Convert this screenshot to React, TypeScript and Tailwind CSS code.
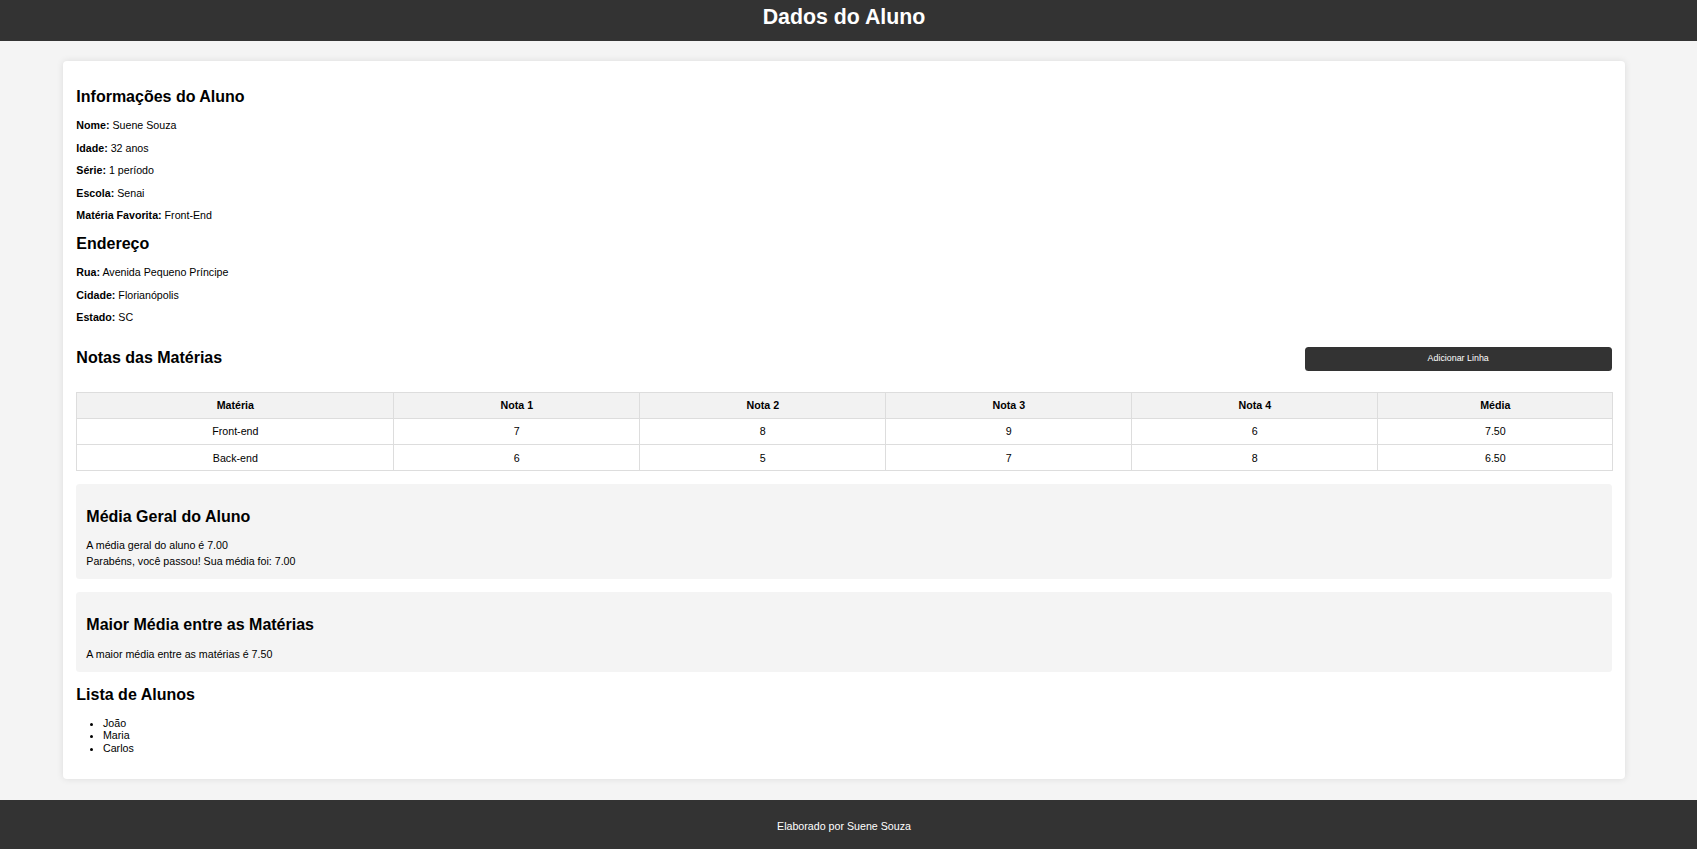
import React from 'react';

interface Nota {
  materia: string;
  notas: number[];
}

const notas: Nota[] = [
  { materia: 'Front-end', notas: [7, 8, 9, 6] },
  { materia: 'Back-end', notas: [6, 5, 7, 8] },
];

const alunos = ['João', 'Maria', 'Carlos'];

const media = (n: number[]) => n.reduce((a, b) => a + b, 0) / n.length;

export default function App() {
  const medias = notas.map((n) => media(n.notas));
  const mediaGeral = media(medias);
  const maiorMedia = Math.max(...medias);

  return (
    <div className="min-h-screen bg-[#f4f4f4] font-['Liberation_Sans',Arial,sans-serif] text-black">
      {/* Header */}
      <header className="h-[41px] bg-[#333333] pt-[5.4px] pr-[9px] text-center">
        <h1 className="text-[21.33px] font-bold leading-[24.5px] text-white">Dados do Aluno</h1>
      </header>

      <main className="pt-[20px] pb-[21px] pl-[63px]">
        <div className="w-[1562px] rounded-[4px] bg-white p-[13.33px] shadow-[0_0_7px_rgba(0,0,0,0.1)] text-[10.67px]">
          {/* Informações */}
          <div>
            <h2 className="my-[13.28px] text-[16px] font-bold leading-[18.4px]">Informações do Aluno</h2>
            <p className="my-[10.5px] leading-[12px]"><strong>Nome:</strong> Suene Souza</p>
            <p className="my-[10.5px] leading-[12px]"><strong>Idade:</strong> 32 anos</p>
            <p className="my-[10.5px] leading-[12px]"><strong>Série:</strong> 1 período</p>
            <p className="my-[10.5px] leading-[12px]"><strong>Escola:</strong> Senai</p>
            <p className="my-[10.5px] leading-[12px]"><strong>Matéria Favorita:</strong> Front-End</p>
          </div>

          {/* Endereço */}
          <div>
            <h2 className="my-[13.28px] text-[16px] font-bold leading-[18.4px]">Endereço</h2>
            <p className="my-[10.5px] leading-[12px]"><strong>Rua:</strong> Avenida Pequeno Príncipe</p>
            <p className="my-[10.5px] leading-[12px]"><strong>Cidade:</strong> Florianópolis</p>
            <p className="my-[10.5px] leading-[12px]"><strong>Estado:</strong> SC</p>
          </div>

          {/* Notas */}
          <div className="mt-[12.9px] flex items-center justify-between">
            <h2 className="my-[13.28px] text-[16px] font-bold leading-[18.4px]">Notas das Matérias</h2>
            <button className="h-[24px] w-[307px] rounded-[3.5px] bg-[#333333] text-[8.9px] text-white">
              Adicionar Linha
            </button>
          </div>

          <table className="mt-[10.5px] w-full table-fixed border-collapse text-center leading-[12.27px]">
            <colgroup>
              <col className="w-[317px]" />
              <col className="w-[246px]" />
              <col className="w-[246px]" />
              <col className="w-[246px]" />
              <col className="w-[246px]" />
              <col className="w-[235px]" />
            </colgroup>
            <thead>
              <tr className="bg-[#f2f2f2]">
                {['Matéria', 'Nota 1', 'Nota 2', 'Nota 3', 'Nota 4', 'Média'].map((h) => (
                  <th key={h} className="border border-[#dddddd] py-[6.5px] font-bold">
                    {h}
                  </th>
                ))}
              </tr>
            </thead>
            <tbody>
              {notas.map((n, i) => (
                <tr key={n.materia}>
                  <td className="border border-[#dddddd] py-[6.5px]">{n.materia}</td>
                  {n.notas.map((v, j) => (
                    <td key={j} className="border border-[#dddddd] py-[6.5px]">{v}</td>
                  ))}
                  <td className="border border-[#dddddd] py-[6.5px]">{medias[i].toFixed(2)}</td>
                </tr>
              ))}
            </tbody>
          </table>

          {/* Média geral */}
          <div className="mt-[13px] rounded-[3.5px] bg-[#f4f4f4] px-[10px] pt-[10px] pb-[10px]">
            <h2 className="mt-[13.3px] text-[16px] font-bold leading-[18.4px]">Média Geral do Aluno</h2>
            <div className="mt-[11px] leading-[16px]">
              <div>A média geral do aluno é {mediaGeral.toFixed(2)}</div>
              <div>Parabéns, você passou! Sua média foi: {mediaGeral.toFixed(2)}</div>
            </div>
          </div>

          {/* Maior média */}
          <div className="mt-[13.3px] rounded-[3.5px] bg-[#f4f4f4] px-[10px] pt-[10px] pb-[10px]">
            <h2 className="mt-[13.3px] text-[16px] font-bold leading-[18.4px]">Maior Média entre as Matérias</h2>
            <div className="mt-[12px] leading-[16px]">A maior média entre as matérias é {maiorMedia.toFixed(2)}</div>
          </div>

          {/* Lista */}
          <h2 className="mt-[13.5px] mb-[13.28px] text-[16px] font-bold leading-[18.4px]">Lista de Alunos</h2>
          <ul className="mb-[12px] list-disc pl-[26.67px] leading-[12.27px]">
            {alunos.map((a) => (
              <li key={a}>{a}</li>
            ))}
          </ul>
        </div>
      </main>

      {/* Footer */}
      <footer className="h-[49px] bg-[#333333] pt-[20px] pr-[9px] text-center text-[10.67px] leading-[12.27px] text-white">
        Elaborado por Suene Souza
      </footer>
    </div>
  );
}
